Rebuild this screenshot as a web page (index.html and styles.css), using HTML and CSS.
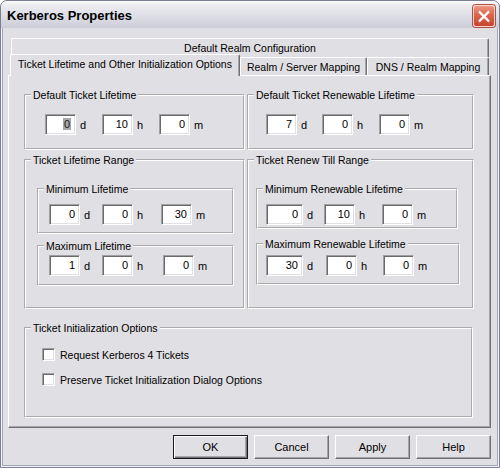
FILE: index.html
```html
<!DOCTYPE html>
<html>
<head>
<meta charset="utf-8">
<link rel="stylesheet" href="styles.css">
</head>
<body>
<div class="window">
  <div class="titlebar">
    <span class="title">Kerberos Properties</span>
    <div class="close"><svg width="21" height="21" viewBox="0 0 21 21"><path d="M6 6 L15 15 M15 6 L6 15" stroke="#fff" stroke-width="2.4" stroke-linecap="square"/></svg></div>
  </div>
  <div class="client">
    <div class="tabs">
      <div class="tabrow back">
        <div class="tab t-realm">Default Realm Configuration</div>
      </div>
      <div class="tabrow front">
        <div class="tab sel t-ticket">Ticket Lifetime and Other Initialization Options</div>
        <div class="tab t-server">Realm / Server Mapping</div>
        <div class="tab t-dns">DNS / Realm Mapping</div>
      </div>
    </div>
    <div class="panel">
      <div class="grid">
        <fieldset class="box b-top">
          <legend>Default Ticket Lifetime</legend>
          <div class="row r-dl">
            <div class="cell"><div class="field"><span class="hl">0</span></div><span class="unit">d</span></div>
            <div class="cell"><div class="field">10</div><span class="unit">h</span></div>
            <div class="cell"><div class="field">0</div><span class="unit">m</span></div>
          </div>
        </fieldset>
        <fieldset class="box b-top">
          <legend>Default Ticket Renewable Lifetime</legend>
          <div class="row r-dr">
            <div class="cell"><div class="field">7</div><span class="unit">d</span></div>
            <div class="cell"><div class="field">0</div><span class="unit">h</span></div>
            <div class="cell"><div class="field">0</div><span class="unit">m</span></div>
          </div>
        </fieldset>
        <fieldset class="box b-range">
          <legend>Ticket Lifetime Range</legend>
          <fieldset class="box inner in-minl">
            <legend>Minimum Lifetime</legend>
            <div class="row r-minl">
              <div class="cell"><div class="field">0</div><span class="unit">d</span></div>
              <div class="cell"><div class="field">0</div><span class="unit">h</span></div>
              <div class="cell"><div class="field">30</div><span class="unit">m</span></div>
            </div>
          </fieldset>
          <fieldset class="box inner in-maxl">
            <legend>Maximum Lifetime</legend>
            <div class="row r-maxl">
              <div class="cell"><div class="field">1</div><span class="unit">d</span></div>
              <div class="cell"><div class="field">0</div><span class="unit">h</span></div>
              <div class="cell"><div class="field">0</div><span class="unit">m</span></div>
            </div>
          </fieldset>
        </fieldset>
        <fieldset class="box b-range">
          <legend>Ticket Renew Till Range</legend>
          <fieldset class="box inner in-minr">
            <legend>Minimum Renewable Lifetime</legend>
            <div class="row r-minr">
              <div class="cell"><div class="field wide">0</div><span class="unit">d</span></div>
              <div class="cell"><div class="field">10</div><span class="unit">h</span></div>
              <div class="cell"><div class="field">0</div><span class="unit">m</span></div>
            </div>
          </fieldset>
          <fieldset class="box inner in-maxr">
            <legend>Maximum Renewable Lifetime</legend>
            <div class="row r-maxr">
              <div class="cell"><div class="field wide">30</div><span class="unit">d</span></div>
              <div class="cell"><div class="field">0</div><span class="unit">h</span></div>
              <div class="cell"><div class="field">0</div><span class="unit">m</span></div>
            </div>
          </fieldset>
        </fieldset>
      </div>
      <fieldset class="box b-init">
        <legend>Ticket Initialization Options</legend>
        <div class="checks">
          <label class="check"><span class="cbox"></span>Request Kerberos 4 Tickets</label>
          <label class="check"><span class="cbox"></span>Preserve Ticket Initialization Dialog Options</label>
        </div>
      </fieldset>
    </div>
    <div class="buttons">
      <div class="btn default">OK</div>
      <div class="btn">Cancel</div>
      <div class="btn">Apply</div>
      <div class="btn">Help</div>
    </div>
  </div>
</div>
</body>
</html>
```
FILE: styles.css
```css
html, body {
  margin: 0;
  padding: 0;
  background: #ffffff;
}
body {
  width: 500px;
  height: 468px;
  overflow: hidden;
  font-family: "Liberation Sans", Arial, sans-serif;
  font-size: 11px;
  color: #000;
}
.window {
  box-sizing: border-box;
  width: 500px;
  height: 468px;
  border: 1px solid #7b7f95;
  border-radius: 7px 7px 0 0;
  background: #e0dfe3;
  box-shadow: inset 1px 0 #f4f4f8, inset -1px 0 #f4f4f8, inset 0 -1px #f4f4f8,
              inset 2px 0 #a4a6b8, inset -2px 0 #a4a6b8, inset 0 -2px #a4a6b8;
  overflow: hidden;
  display: flex;
  flex-direction: column;
}
.titlebar {
  height: 27px;
  flex: none;
  display: flex;
  align-items: center;
  justify-content: space-between;
  padding: 0 4px 0 6px;
  background: linear-gradient(to bottom, #fdfdfe 0%, #ececf1 14%, #dedee6 55%, #cdcdd8 100%);
  border-radius: 6px 6px 0 0;
}
.title {
  font-weight: bold;
  font-size: 13px;
  padding-top: 2px;
  color: #000;
}
.close {
  box-sizing: border-box;
  width: 22px;
  height: 22px;
  margin-top: 3px;
  border: 1px solid #f6d8d0;
  border-radius: 3px;
  background: linear-gradient(to bottom, #ec9a86 0%, #df6850 40%, #c8432c 100%);
  box-shadow: 0 0 0 1px #b0503e;
  display: flex;
  align-items: center;
  justify-content: center;
}
.close svg { display: block; }
.client {
  flex: 1;
  padding: 10px 8px 0 7px;
  display: flex;
  flex-direction: column;
}
.tabs {
  display: flex;
  flex-direction: column;
}
.tabrow {
  display: flex;
}
.tabrow.back {
  padding-left: 3px;
  height: 19px;
}
.tabrow.front {
  height: 18px;
  align-items: flex-end;
  padding-left: 2px;
}
.tab {
  box-sizing: border-box;
  background: #e0dfe3;
  border-top: 1px solid #fff;
  border-left: 1px solid #fff;
  border-right: 1px solid #6f6f74;
  box-shadow: inset -1px 0 #a6a6aa;
  border-radius: 2px 2px 0 0;
  display: flex;
  align-items: center;
  justify-content: center;
  white-space: nowrap;
  font-size: 10.5px;
}
.t-realm { width: 478px; height: 19px; }
.t-ticket { width: 230px; }
.t-server { width: 127px; height: 18px; }
.t-dns { width: 122px; height: 18px; }
.tab.sel {
  height: 22px;
  margin-bottom: -1px;
  padding-bottom: 3px;
  position: relative;
  z-index: 1;
}
.panel {
  box-sizing: border-box;
  height: 353px;
  border: 1px solid;
  border-color: #fff #6f6f74 #6f6f74 #fff;
  box-shadow: inset -1px -1px #a6a6aa;
  padding: 12px 0 0 15px;
}
.grid {
  display: grid;
  grid-template-columns: 221px 227px;
  grid-template-rows: 62px 156px;
  column-gap: 2px;
  row-gap: 3px;
}
.box {
  box-sizing: border-box;
  margin: 0;
  padding: 0;
  min-width: 0;
  border: 2px groove #fff;
}
.box legend {
  padding: 0 2px;
  margin-left: 5px;
  line-height: 14px;
  font-size: 10.5px;
  white-space: nowrap;
}
.b-init {
  width: 449px;
  height: 97px;
  margin-top: 12px;
}
.inner { margin-left: 11px; }
.in-minl { width: 197px; height: 52px; margin-top: 15px; }
.in-maxl { width: 197px; height: 47px; margin-top: 5px; }
.in-minr { width: 202px; height: 47px; margin-top: 15px; margin-left: 7px; }
.in-maxr { width: 204px; height: 48px; margin-top: 8px; margin-left: 7px; }

.row {
  display: grid;
  grid-auto-flow: column;
}
.r-dl { grid-template-columns: 57px 57px auto; padding-left: 19px; margin-top: 12px; }
.r-dr { grid-template-columns: 56px 57px auto; padding-left: 17px; margin-top: 12px; }
.r-minl { grid-template-columns: 53px 59px auto; padding-left: 10px; margin-top: 8px; }
.r-maxl { grid-template-columns: 53px 61px auto; padding-left: 10px; margin-top: 2px; }
.r-minr { grid-template-columns: 58px 58px auto; padding-left: 8px; margin-top: 8px; }
.r-maxr { grid-template-columns: 60px 57px auto; padding-left: 8px; margin-top: 4px; }
.cell {
  display: flex;
  align-items: center;
}
.field {
  box-sizing: border-box;
  width: 31px;
  height: 21px;
  background: #fff;
  border: 1px solid;
  border-color: #a0a0a4 #fff #fff #a0a0a4;
  box-shadow: inset 1px 1px #6a6a6a, inset -1px -1px #e0dfe3;
  text-align: right;
  padding: 0 4px 0 0;
  line-height: 19px;
  font-size: 11px;
}
.field.wide { width: 37px; }
.hl {
  background: #a8a8ac;
  color: #1a1a1a;
  padding: 0 1px;
}
.unit {
  margin-left: 4px;
  font-size: 11px;
}
.checks {
  display: flex;
  flex-direction: column;
  gap: 12px;
  padding-left: 16px;
  margin-top: 13px;
}
.check {
  display: flex;
  align-items: center;
  height: 13px;
  font-size: 10.5px;
}
.cbox {
  box-sizing: border-box;
  width: 13px;
  height: 13px;
  margin-right: 5px;
  background: #fff;
  border: 1px solid;
  border-color: #a0a0a4 #fff #fff #a0a0a4;
  box-shadow: inset 1px 1px #6a6a6a, inset -1px -1px #e0dfe3;
}
.buttons {
  display: flex;
  justify-content: flex-end;
  gap: 6px;
  margin-top: 7px;
}
.btn {
  box-sizing: border-box;
  width: 75px;
  height: 24px;
  border: 1px solid;
  border-color: #fff #6f6f74 #6f6f74 #fff;
  box-shadow: inset -1px -1px #a6a6aa;
  background: #e0dfe3;
  display: flex;
  align-items: center;
  justify-content: center;
  font-size: 11px;
}
.btn.default {
  border-color: #1a1a1a;
  box-shadow: inset 1px 1px #fff, inset -1px -1px #6f6f74, inset -2px -2px #a6a6aa;
}
```
